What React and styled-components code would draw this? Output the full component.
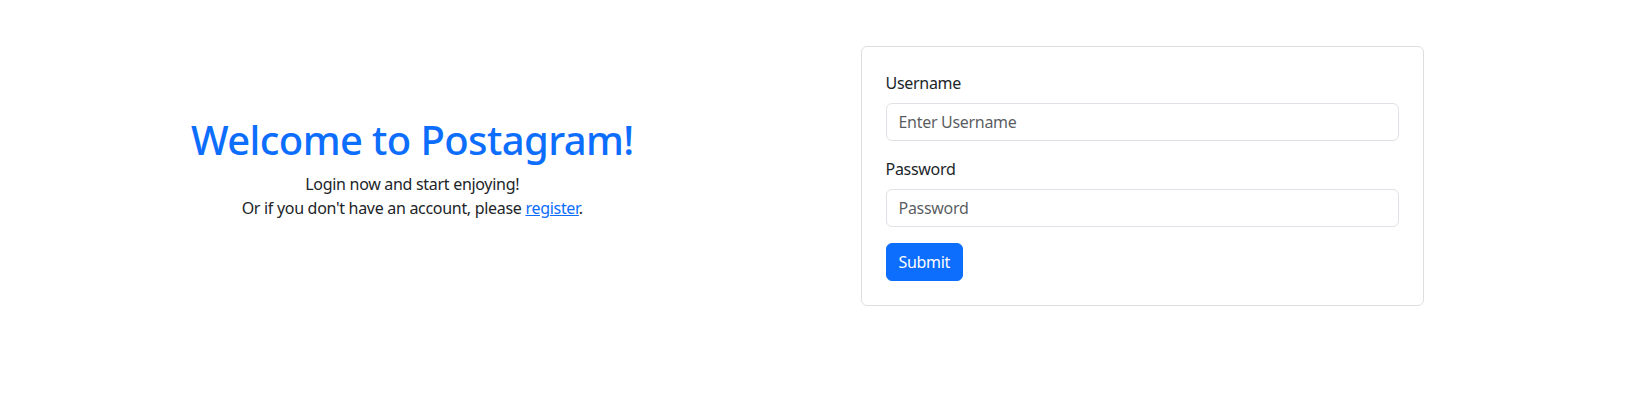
import React from "react";
import styled, { createGlobalStyle } from "styled-components";

const GlobalStyle = createGlobalStyle`
  * { box-sizing: border-box; }
  body {
    margin: 0;
    background: #fff;
    color: #212529;
    font-family: "Noto Sans", "DejaVu Sans", sans-serif;
    font-size: 16px;
    line-height: 1.5;
    letter-spacing: -0.3px;
  }
`;

const Page = styled.div`
  display: grid;
  grid-template-columns: 1fr 1fr;
  align-items: center;
  padding-top: 46px;
`;

const Intro = styled.div`
  text-align: center;
  padding: 0 12px;
`;

const Heading = styled.h1`
  margin: 0 0 8px;
  font-size: 40px;
  font-weight: 500;
  line-height: 1.2;
  letter-spacing: -0.6px;
  color: #0d6efd;
`;

const Lead = styled.p`
  margin: 0 0 16px;
`;

const RegisterLink = styled.a`
  color: #0d6efd;
  text-decoration: underline;
`;

const FormCol = styled.div`
  padding-left: 36px;
`;

const Card = styled.form`
  width: 563px;
  border: 1px solid rgba(0, 0, 0, 0.13);
  border-radius: 6px;
  padding: 24px;
`;

const Field = styled.div`
  margin-bottom: 16px;
`;

const Label = styled.label`
  display: block;
  margin-bottom: 8px;
`;

const Input = styled.input`
  display: block;
  width: 100%;
  height: 38px;
  padding: 6px 12px;
  font: inherit;
  letter-spacing: inherit;
  color: #212529;
  border: 1px solid #dee2e6;
  border-radius: 6px;
  outline: none;
  &::placeholder {
    color: rgba(33, 37, 41, 0.75);
  }
`;

const SubmitButton = styled.button`
  height: 38px;
  padding: 6px 12px;
  font: inherit;
  letter-spacing: inherit;
  color: #fff;
  background: #0d6efd;
  border: 1px solid #0d6efd;
  border-radius: 6px;
  cursor: pointer;
`;

export default function App() {
  return (
    <>
      <GlobalStyle />
      <Page>
        <Intro>
          <Heading>Welcome to Postagram!</Heading>
          <Lead>
            Login now and start enjoying!
            <br />
            Or if you don't have an account, please{" "}
            <RegisterLink href="#">register</RegisterLink>.
          </Lead>
        </Intro>
        <FormCol>
          <Card onSubmit={(e) => e.preventDefault()}>
            <Field>
              <Label htmlFor="username">Username</Label>
              <Input id="username" type="text" placeholder="Enter Username" />
            </Field>
            <Field>
              <Label htmlFor="password">Password</Label>
              <Input id="password" type="password" placeholder="Password" />
            </Field>
            <SubmitButton type="submit">Submit</SubmitButton>
          </Card>
        </FormCol>
      </Page>
    </>
  );
}
